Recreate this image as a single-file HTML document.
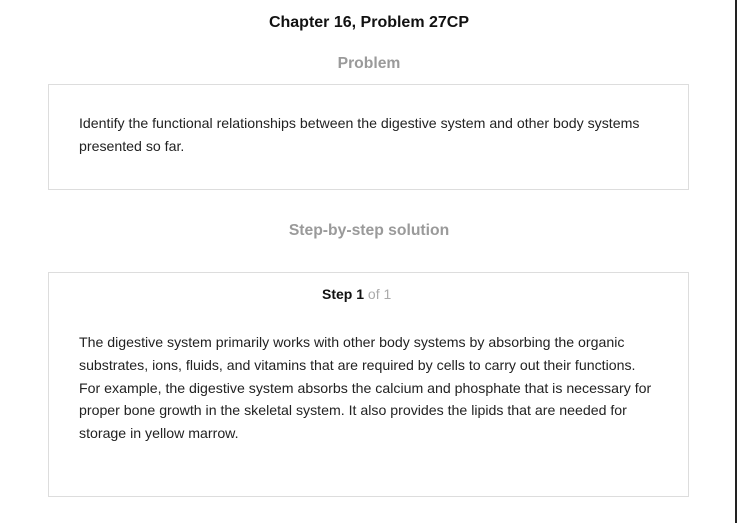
<!DOCTYPE html>
<html><head><style>
body{margin:0;width:738px;height:523px;background:#fff;font-family:"Liberation Sans",Arial,sans-serif;position:relative;overflow:hidden;color:#111}
.abs{position:absolute}
h1{position:absolute;top:13px;left:0;width:738px;text-align:center;font-size:16px;font-weight:bold;margin:0;line-height:20px}
.sec{position:absolute;left:0;width:738px;text-align:center;font-size:15.7px;font-weight:bold;color:#9a9a9a;line-height:20px}
.box{position:absolute;left:48px;width:639px;border:1px solid #ddd}
.txt{position:absolute;left:79px;width:640px;font-size:14.15px;line-height:22.8px;color:#222;white-space:nowrap}
.vline{position:absolute;left:735px;top:0;width:2px;height:523px;background:#222}
</style></head><body>
<h1>Chapter 16, Problem 27CP</h1>
<div class="sec" style="top:54px">Problem</div>
<div class="box" style="top:84px;height:104px"></div>
<div class="txt" style="top:112px">Identify the functional relationships between the digestive system and other body systems<br>presented so far.</div>
<div class="sec" style="top:221px">Step-by-step solution</div>
<div class="box" style="top:272px;height:223px"></div>
<div class="abs" style="top:286px;left:322px;font-size:14px;line-height:16px;white-space:nowrap"><b>Step 1</b> <span style="color:#aaa">of 1</span></div>
<div class="txt" style="top:331px">The digestive system primarily works with other body systems by absorbing the organic<br>substrates, ions, fluids, and vitamins that are required by cells to carry out their functions.<br>For example, the digestive system absorbs the calcium and phosphate that is necessary for<br>proper bone growth in the skeletal system. It also provides the lipids that are needed for<br>storage in yellow marrow.</div>
<div class="vline"></div>
</body></html>
